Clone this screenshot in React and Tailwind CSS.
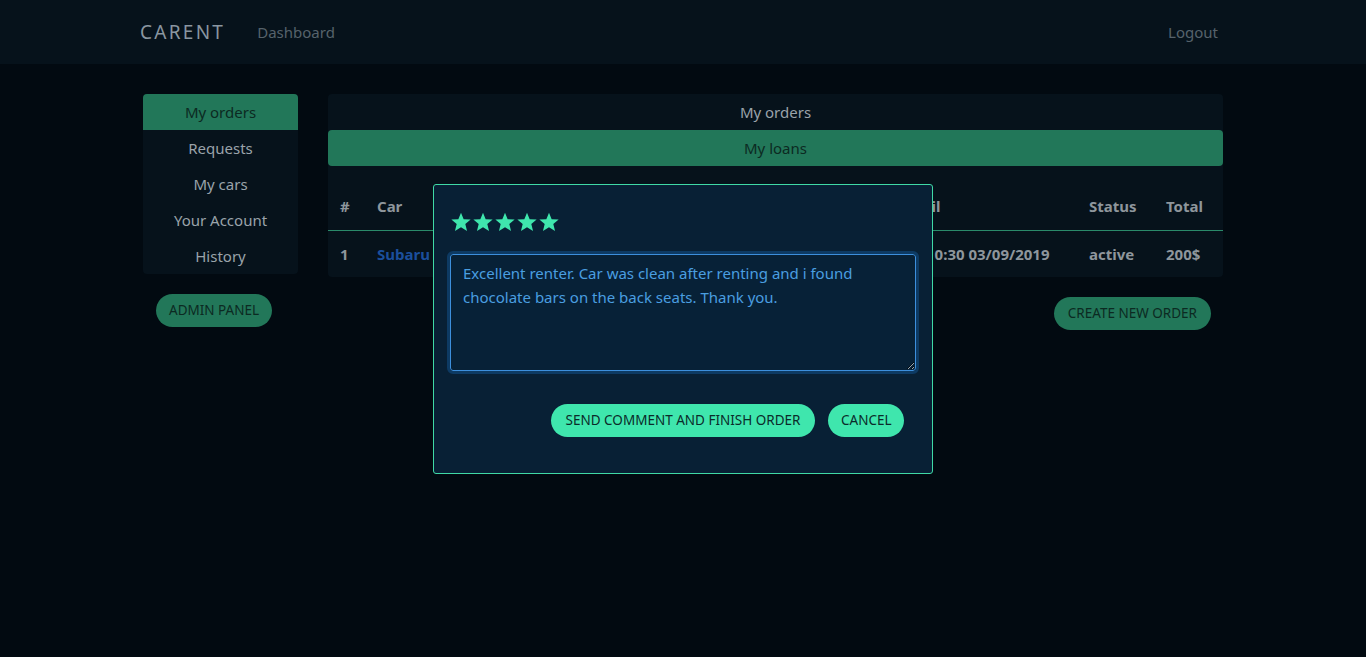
import React from 'react';

const font = { fontFamily: '"Noto Sans", "Open Sans", sans-serif' };

const menu = ['My orders', 'Requests', 'My cars', 'Your Account', 'History'];

const Star = () => (
    <svg viewBox="0 0 24 24" className="w-[22px] h-[22px] fill-[#3fe6ad]">
        <path d="M12 1.8l2.9 7.1 7.6.5-5.8 4.9 1.9 7.4L12 17.6l-6.6 4.1 1.9-7.4L1.5 9.4l7.6-.5z" />
    </svg>
);

const App = () => {
    return (
        <div className="min-h-screen bg-[#020a11] relative" style={font}>
            {/* Navbar */}
            <nav className="h-16 bg-[#06121b]">
                <div className="w-[1086px] mx-auto h-full flex items-center">
                    <span className="text-[#8a96a0] text-[19px] tracking-[0.12em]">CARENT</span>
                    <span className="ml-8 text-[#56626b] text-[15px]">Dashboard</span>
                    <span className="ml-auto text-[#56626b] text-[15px] mr-2">Logout</span>
                </div>
            </nav>

            <div className="w-[1086px] mx-auto pt-[30px] flex gap-[30px]">
                {/* Sidebar */}
                <div className="w-[155px] ml-[3px] shrink-0">
                    <div className="bg-[#06121b] rounded-sm">
                        {menu.map((m, i) => (
                            <div
                                key={m}
                                className={`h-9 flex items-center justify-center text-[15px] ${i === 0 ? 'bg-[#227759] text-[#0c2a22] rounded-t-sm' : 'text-[#9aa3aa]'}`}
                            >
                                {m}
                            </div>
                        ))}
                    </div>
                    <button className="mt-5 ml-[13px] h-[33px] px-[13px] rounded-full bg-[#227759] text-[#0c2a22] text-[13.5px]">
                        ADMIN PANEL
                    </button>
                </div>

                {/* Main */}
                <div className="w-[895px] shrink-0">
                    <div className="bg-[#06121b] rounded-sm">
                        <div className="h-9 flex items-center justify-center text-[15px] text-[#9aa3aa]">My orders</div>
                        <div className="h-9 flex items-center justify-center text-[15px] text-[#0c2a22] bg-[#227759] rounded-sm">My loans</div>
                        <table className="w-full table-fixed mt-4 text-[15px] font-bold text-[#8e969c]">
                            <colgroup>
                                <col className="w-[49px]" />
                                <col className="w-[280px]" />
                                <col className="w-[247px]" />
                                <col className="w-[185px]" />
                                <col className="w-[77px]" />
                                <col />
                            </colgroup>
                            <thead>
                                <tr className="h-[48px] border-b border-[#2a8a6a] text-left">
                                    <th className="pl-3">#</th>
                                    <th>Car</th>
                                    <th>From</th>
                                    <th>Until</th>
                                    <th>Status</th>
                                    <th>Total</th>
                                </tr>
                            </thead>
                            <tbody>
                                <tr className="h-[47px] text-left">
                                    <td className="pl-3">1</td>
                                    <td className="text-[#1b4f9c]">Subaru Impreza</td>
                                    <td>10:30 01/09/2019</td>
                                    <td className="pl-[22px]">10:30 03/09/2019</td>
                                    <td>active</td>
                                    <td>200$</td>
                                </tr>
                            </tbody>
                        </table>
                    </div>
                    <div className="flex justify-end mt-5 mr-3">
                        <button className="h-[33px] px-[14px] rounded-full bg-[#227759] text-[#0c2a22] text-[13.5px]">
                            CREATE NEW ORDER
                        </button>
                    </div>
                </div>
            </div>

            {/* Modal */}
            <div className="absolute left-[433px] top-[184px] w-[500px] h-[290px] bg-[#082035] border border-[#3fd9a6] rounded-[3px] px-4 pt-[26px]">
                <div className="flex">
                    <Star /><Star /><Star /><Star /><Star />
                </div>
                <textarea
                    className="mt-[21px] w-[466px] h-[117px] block bg-[#072137] border border-[#3d8fdc] rounded-[3px] outline outline-[3px] outline-[#0d3a63] text-[#4a9ee0] text-[15px] leading-[24px] px-3 py-[6px] resize-y"
                    style={font}
                    defaultValue="Excellent renter. Car was clean after renting and i found chocolate bars on the back seats. Thank you."
                />
                <div className="flex justify-end gap-[13px] mt-[33px] mr-[12px]">
                    <button className="h-[33px] px-[15px] rounded-full bg-[#3fe6ad] text-[#0b2b2a] text-[13.5px]">
                        SEND COMMENT AND FINISH ORDER
                    </button>
                    <button className="h-[33px] px-[12.5px] rounded-full bg-[#3fe6ad] text-[#0b2b2a] text-[13.5px]">
                        CANCEL
                    </button>
                </div>
            </div>
        </div>
    );
};

export default App;
